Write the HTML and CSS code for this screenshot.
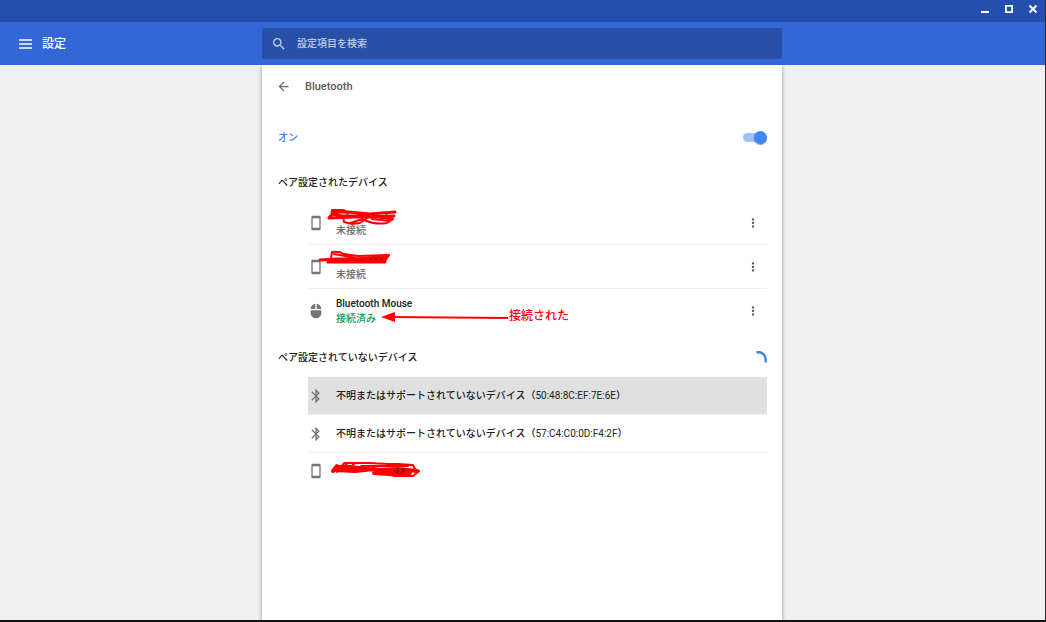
FILE: index.html
```html
<!DOCTYPE html>
<html lang="ja">
<head>
<meta charset="utf-8">
<meta name="viewport" content="width=device-width, initial-scale=1">
<title>設定</title>
<link rel="stylesheet" href="styles.css">
</head>
<body>
<svg class="defs" aria-hidden="true">
  <symbol id="phone" viewBox="0 0 24 24"><path d="M17 1.01 7 1c-1.1 0-2 .9-2 2v18c0 1.1.9 2 2 2h10c1.1 0 2-.9 2-2V3c0-1.1-.9-1.99-2-1.99zM17 19H7V5h10v14z"/></symbol>
  <symbol id="mouse" viewBox="0 0 24 24"><path d="M13 1.07V9h7c0-4.08-3.05-7.44-7-7.93zM4 15c0 4.42 3.58 8 8 8s8-3.58 8-8v-4H4v4zm7-13.93C7.05 1.56 4 4.92 4 9h7V1.07z"/></symbol>
  <symbol id="bluetooth" viewBox="0 0 24 24"><path d="M17.71 7.71 12 2h-1v7.59L6.41 5 5 6.41 10.59 12 5 17.59 6.41 19 11 14.41V22h1l5.71-5.71-4.3-4.29 4.3-4.29zM13 5.83l1.88 1.88L13 9.59V5.83zm1.88 10.46L13 18.17v-3.76l1.88 1.88z"/></symbol>
  <symbol id="more" viewBox="0 0 24 24"><path d="M12 8c1.1 0 2-.9 2-2s-.9-2-2-2-2 .9-2 2 .9 2 2 2zm0 2c-1.1 0-2 .9-2 2s.9 2 2 2 2-.9 2-2-.9-2-2-2zm0 6c-1.1 0-2 .9-2 2s.9 2 2 2 2-.9 2-2-.9-2-2-2z"/></symbol>
</svg>
<div class="window">
  <div class="titlebar">
    <button class="winbtn" aria-label="最小化"><svg viewBox="0 0 10 10"><path d="M1 8h8" stroke="#fff" stroke-width="2"/></svg></button>
    <button class="winbtn" aria-label="最大化"><svg viewBox="0 0 10 10"><path d="M1.9 1.9h6.2v6.2H1.9z" fill="none" stroke="#fff" stroke-width="1.8"/></svg></button>
    <button class="winbtn" aria-label="閉じる"><svg viewBox="0 0 10 10"><path d="m1.5 1.5 7 7M8.5 1.5l-7 7" stroke="#fff" stroke-width="1.9"/></svg></button>
  </div>
  <header class="toolbar">
    <div class="brand">
      <button class="icon-btn" aria-label="メニュー"><svg class="menu" viewBox="0 0 14 10"><path d="M0 1h13M0 5h13M0 9h13" stroke="#fff" stroke-width="1.5"/></svg></button>
      <h1 class="title">設定</h1>
    </div>
    <label class="search">
      <svg class="search-icon" viewBox="0 0 24 24"><path d="M15.5 14h-.79l-.28-.27A6.471 6.471 0 0 0 16 9.5 6.5 6.5 0 1 0 9.5 16c1.61 0 3.09-.59 4.23-1.57l.27.28v.79l5 4.99L20.49 19l-4.99-5zm-6 0C7.01 14 5 11.99 5 9.5S7.01 5 9.5 5 14 7.01 14 9.5 11.99 14 9.5 14z"/></svg>
      <input class="search-input" type="text" placeholder="設定項目を検索" aria-label="設定項目を検索">
    </label>
  </header>
  <div class="content">
    <main class="card">
      <div class="page-head">
        <button class="icon-btn" aria-label="戻る"><svg class="back" viewBox="0 0 24 24"><path d="M20 11H7.83l5.59-5.59L12 4l-8 8 8 8 1.41-1.41L7.83 13H20v-2z"/></svg></button>
        <h2 class="page-title">Bluetooth</h2>
      </div>
      <div class="power">
        <label for="power">オン</label>
        <input class="toggle" id="power" type="checkbox" role="switch" checked>
      </div>
      <div class="section-row first">
        <h3 class="section">ペア設定されたデバイス</h3>
      </div>
      <ul class="list">
        <li class="row tall">
          <svg class="device"><use href="#phone"/></svg>
          <div class="info redacted"><span class="status">未接続</span></div>
          <button class="icon-btn" aria-label="その他の操作"><svg class="more"><use href="#more"/></svg></button>
          <svg class="ink" viewBox="0 0 120 44" width="120" height="44">
            <path d="M24 11 40 11 62 13 87 11 M21 17 25 12 M22 17 46 16 64 16 86 15 M24 13 34 15 60 14 84 17 M64 15 84 18" stroke-width="3"/>
            <path d="M35 15 36 21 44 23 52 22 59 17M42 22 55 18M56 19Q67 24 79 22L85 18M24 9 36 9 38 11M64 18 82 20" stroke-width="2"/>
            <path class="trace" d="M38 13h3M51 14h2M64 13h2M77 13h3"/>
          </svg>
        </li>
        <li class="row tall">
          <svg class="device"><use href="#phone"/></svg>
          <div class="info redacted"><span class="status">未接続</span></div>
          <button class="icon-btn" aria-label="その他の操作"><svg class="more"><use href="#more"/></svg></button>
          <svg class="ink" viewBox="0 0 120 44" width="120" height="44">
            <path d="M12 15 28 14 48 14 80 11 M20 17 40 17 77 17 M30 14 78 14 M27 16 76 15" stroke-width="3"/>
            <path d="M23 13 24 7Q31 6 36 9L50 11 80 10M26 9 48 13M76 17 81 10" stroke-width="2"/>
            <path class="trace" d="M53 15h1M62 14h2M66 14h3M72 14h3"/>
          </svg>
        </li>
        <li class="row tall">
          <svg class="device"><use href="#mouse"/></svg>
          <div class="info"><span class="name">Bluetooth Mouse</span><span class="status connected">接続済み</span></div>
          <button class="icon-btn" aria-label="その他の操作"><svg class="more"><use href="#more"/></svg></button>
          <div class="note">
            <svg class="arrow" viewBox="0 0 128 12" width="128" height="12"><path d="M10 7 127 8" stroke="red" stroke-width="2"/><path d="M0 7 14 2V12z" fill="red"/></svg>
            <span>接続された</span>
          </div>
        </li>
      </ul>
      <div class="section-row">
        <h3 class="section">ペア設定されていないデバイス</h3>
        <svg class="spinner" viewBox="0 0 14 14" role="img" aria-label="検索中"><path d="M3.5 1.5C9 0 14 4.5 12.5 11.500" fill="none" stroke="#4285f4" stroke-width="2.4"/></svg>
      </div>
      <ul class="list">
        <li class="row active">
          <svg class="device"><use href="#bluetooth"/></svg>
          <span class="name">不明またはサポートされていないデバイス（<span class="address">50:48:8C:EF:7E:6E</span>）</span>
        </li>
        <li class="row">
          <svg class="device"><use href="#bluetooth"/></svg>
          <span class="name">不明またはサポートされていないデバイス（<span class="address">57:C4:C0:0D:F4:2F</span>）</span>
        </li>
        <li class="row">
          <svg class="device"><use href="#phone"/></svg>
          <svg class="ink" viewBox="0 0 120 37" width="120" height="37">
            <path d="M25 18 29 13M27 17 47 18 66 16 87 20 102 20 M30 14 42 14 68 17 90 16 109 18 M66 20 96 22" stroke-width="4"/>
            <path d="M29 19 36 10 60 10 80 11 90 11 105 12 107 16M31 17 40 10M37 18 46 11M46 17 54 13 100 13M86 23 105 23 111 18 106 16" stroke-width="2"/>
            <path class="trace" d="M43 16h2M56 15h2M86 18h2M90 15v6M93 16h3v3h-3"/>
          </svg>
        </li>
      </ul>
    </main>
  </div>
</div>
</body>
</html>
```
FILE: styles.css
```css
* { box-sizing: border-box; }

body {
  margin: 0;
  font: 500 10px/15px Roboto, "Noto Sans CJK JP", sans-serif;
  color: #212121;
}

h1, h2, h3, ul { margin: 0; padding: 0; font: inherit; }
ul { list-style: none; }
button { border: 0; padding: 0; background: none; cursor: pointer; }
svg { display: block; flex: none; }
.defs { display: none; }

.window {
  min-height: 100vh;
  display: flex;
  flex-direction: column;
  background: #f0f0f0;
  border-right: 1px solid #2b2b30;
  border-bottom: 2px solid #111;
}

.titlebar {
  height: 22px;
  padding: 4px 7px 0 0;
  display: flex;
  justify-content: flex-end;
  align-items: flex-start;
  gap: 14px;
  background: #244fae;
}
.winbtn svg { width: 10px; height: 10px; }

.toolbar {
  height: 43px;
  padding-right: 1px;
  display: grid;
  grid-template-columns: 1fr minmax(0, 520px) 1fr;
  align-items: center;
  background: #3367d6;
}
.brand {
  display: flex;
  align-items: center;
  gap: 9px;
  padding-left: 19px;
  color: #fff;
}
.menu { width: 14px; height: 10px; }
.title { font-size: 12px; line-height: 18px; }
.search {
  height: 31px;
  display: flex;
  align-items: center;
  gap: 10px;
  padding: 0 9px;
  border-radius: 2px;
  background: #2850a7;
}
.search-icon { width: 16px; height: 16px; fill: #c1cce6; }
.search-input {
  flex: 1;
  min-width: 0;
  border: 0;
  padding: 0;
  outline: 0;
  background: none;
  font: inherit;
  color: #fff;
}
.search-input::placeholder { color: #bfcae4; opacity: 1; }

.content {
  flex: 1;
  display: flex;
  justify-content: center;
  padding-right: 1px;
  overflow: hidden;
}
.card {
  width: 100%;
  max-width: 520px;
  padding: 0 15px 0 16px;
  background: #fff;
  box-shadow: 0 2px 4px rgba(0, 0, 0, .4);
}

.page-head {
  height: 43px;
  display: flex;
  align-items: center;
  gap: 14px;
}
.back { width: 15px; height: 15px; margin-left: -2px; fill: #6a6a6a; }
.page-title { font-size: 11px; color: #5a5a5a; }

.power {
  height: 58px;
  display: flex;
  align-items: center;
  justify-content: space-between;
  color: #4285f4;
}
.toggle {
  appearance: none;
  width: 24px;
  height: 13px;
  margin: 0;
  display: flex;
  align-items: center;
  position: relative;
}
.toggle::before {
  content: "";
  width: 20px;
  height: 9px;
  border-radius: 5px;
  background: #a0c2fa;
}
.toggle::after {
  content: "";
  position: absolute;
  right: 0;
  width: 13px;
  height: 13px;
  border-radius: 50%;
  background: #4285f4;
  box-shadow: 0 1px 1px rgba(0, 0, 0, .4);
}

.section { line-height: 34px; }
.section-row {
  display: flex;
  align-items: center;
  justify-content: space-between;
  padding: 8px 0 2px;
}
.section-row.first { padding: 0 0 1px; }
.spinner { width: 14px; height: 14px; }

.list { margin-left: 30px; }
.row {
  position: relative;
  min-height: 38px;
  display: flex;
  align-items: center;
  gap: 12px;
  border-bottom: 1px solid #efefef;
}
.row:last-child { min-height: 36px; border-bottom: 0; }
.row.tall { min-height: 44px; padding-right: 7px; }
.active { background: #e0e0e0; }
.device { width: 16px; height: 16px; fill: #757575; }
.info { flex: 1; display: flex; flex-direction: column; }
.redacted { padding-top: 15px; }
.status { color: #6b6b6b; }
.connected { color: #0f9d58; }
.address { font-weight: 400; }
.more { width: 14px; height: 14px; fill: #5a5a5a; }

/* Hand-drawn marks laid over the rows */
.ink {
  position: absolute;
  left: 0;
  top: 0;
  fill: none;
  stroke: #f00;
  stroke-linecap: round;
  stroke-linejoin: round;
}
.trace { stroke: #4b2020; stroke-width: 1; stroke-linecap: butt; }
.note {
  position: absolute;
  left: 73px;
  top: 17px;
  display: flex;
  align-items: center;
  font-size: 12px;
  line-height: 20px;
  color: #f00;
}
```
